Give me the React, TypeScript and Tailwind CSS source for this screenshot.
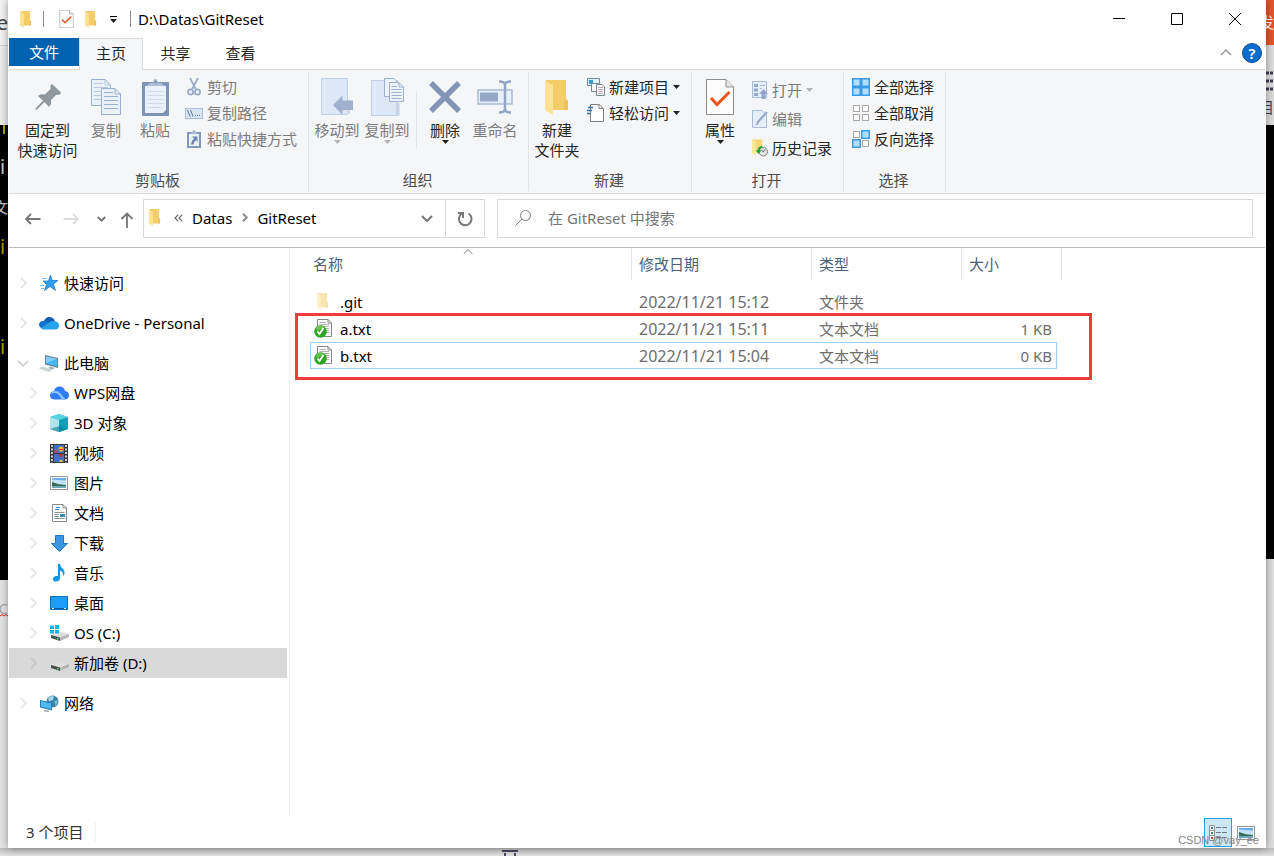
import type { ReactNode } from "react";
import { clsx } from "clsx";

/* ---------- shared glyphs ---------- */

function Folder({ className }: { className: string }) {
    return (
        <svg viewBox="0 0 25 35" className={className} preserveAspectRatio="none" aria-hidden="true">
            <path d="M1 0H21V19L23 21V30H1Z" fill="#f3cd69" />
            <path d="M21 19L23 21V30H19V21Z" fill="#eec25a" />
            <path d="M0 1L8 5V35L0 30Z" fill="#ffe394" />
        </svg>
    );
}

function Caret({ muted }: { muted?: boolean }) {
    return (
        <svg viewBox="0 0 7 4" className={clsx("w-[7px] h-1 shrink-0", muted ? "fill-[#b4b4b4]" : "fill-[#222]")} aria-hidden="true">
            <path d="M0 0H7L3.5 4Z" />
        </svg>
    );
}

type Direction = "right" | "down" | "up" | "left";

const chevronPaths: Record<Direction, string> = {
    right: "M4 1L9 6L4 11",
    left: "M8 1L3 6L8 11",
    down: "M1 4L6 9L11 4",
    up: "M1 8L6 3L11 8",
};

function Chevron({ dir, className }: { dir: Direction; className: string }) {
    return (
        <svg viewBox="0 0 12 12" fill="none" stroke="currentColor" className={clsx("shrink-0", className)} aria-hidden="true">
            <path d={chevronPaths[dir]} />
        </svg>
    );
}

function CheckedPage({ className }: { className: string }) {
    return (
        <svg viewBox="0 0 28 36" className={className} aria-hidden="true">
            <path d="M.5 .5H20L27.5 8V35.5H.5Z" fill="#fdfdfd" stroke="#8d8d8d" />
            <path d="M20 .5V8H27.5" fill="#e6e6e6" stroke="#8d8d8d" />
            <path d="M5 19L11 25.500L23.500 13" fill="none" stroke="#e9541c" strokeWidth="3" />
        </svg>
    );
}

/* ---------- ribbon icons ---------- */

const PinIcon = (
    <svg width="26" height="26" viewBox="0 0 26 26" fill="#8f989d">
        <path d="M0 25L8 16.500L3 12L6 10.200L10 10.500L15.500 5V1.500L17 0L26 8.500L25 10.500L21 11L16 16V20L14 23L9.500 18L1.500 26Z" />
    </svg>
);

const CopyIcon = (
    <svg width="30" height="36" viewBox="0 0 30 36" fill="#e9f0fa" stroke="#9bb0d1">
        <path d="M.5 .5H14L19.500 6V26.500H.5Z" />
        <path d="M14 .5V6H19.500M3 4.500H12M3 8.500H17M3 12.500H17M3 16.500H17M3 20.500H17" fill="none" stroke="#b9c8e0" />
        <path d="M10.500 9.500H24L29.500 15V35.500H10.500Z" />
        <path d="M24 9.500V15H29.500M13 13.500H22M13 17.500H27M13 21.500H27M13 25.500H27M13 29.500H27" fill="none" />
    </svg>
);

const PasteIcon = (
    <svg width="27" height="37" viewBox="0 0 27 37">
        <rect y="3" width="27" height="34" rx="1" fill="#7f92b8" />
        <path d="M3 7H24V31L21 34H3Z" fill="#ebf1fa" />
        <path d="M5 12.500H22M5 16.500H22M5 20.500H22M5 24.500H22M5 28.500H20" stroke="#cfdcee" />
        <path d="M4 7L8 4H11Q11 0 13.500 0T16 4H19L23 7Z" fill="#b0bdd6" />
        <circle cx="13.500" cy="3" r="1.500" fill="#8194b9" />
    </svg>
);

const CutIcon = (
    <svg width="14" height="18" viewBox="0 0 14 18" fill="none" stroke="#9aabca" strokeWidth="1.800">
        <path d="M3 0L9 11.500M11 0L5 11.500" />
        <circle cx="3.500" cy="14" r="2.600" />
        <circle cx="10.500" cy="14" r="2.600" />
    </svg>
);

const CopyPathIcon = (
    <svg width="18" height="11" viewBox="0 0 18 11">
        <rect x=".5" y=".5" width="17" height="10" fill="#dbe6f5" stroke="#aabddc" />
        <path d="M2.500 2L5 8.500M5.500 2L8 8.500" stroke="#5f769f" fill="none" />
        <path d="M10 7.500H11M12 7.500H13M14 7.500H15" stroke="#5f769f" />
    </svg>
);

const PasteShortcutIcon = (
    <svg width="14" height="18" viewBox="0 0 14 18">
        <path d="M0 2H14V18H0Z" fill="#8598bc" />
        <path d="M2 4H12V16H2Z" fill="#ebf1fa" />
        <path d="M3 4L5 2H5.500Q5.500 0 7 0T8.500 2H9L11 4Z" fill="#a9b8d3" />
        <path d="M5 6.500H10.500V12L8.800 10.300Q6.800 11.500 6.500 14.500H4Q4 11 7 8.500Z" fill="#6f86b0" />
    </svg>
);

const MoveToIcon = (
    <svg width="32" height="38" viewBox="0 0 32 38">
        <path d="M.5 .5H26.500V36.500H.5Z" fill="#dde7f5" stroke="#c3d1e8" />
        <path d="M4 1V36" stroke="#ebf1fa" />
        <path d="M26 24L29 21V36H26Z" fill="#cdd9ec" />
        <path d="M12 27L21.500 17.500V22.500H32V32H21.500V37Z" fill="#a0b1cf" />
    </svg>
);

const CopyToIcon = (
    <svg width="33" height="38" viewBox="0 0 33 38">
        <path d="M.5 2.500H26.500V37.500H.5Z" fill="#dde7f5" stroke="#c3d1e8" />
        <path d="M4 3V37" stroke="#ebf1fa" />
        <path d="M25 25H28.500V37.500H25Z" fill="#c6d3e9" />
        <g fill="#edf3fb" stroke="#9bb0d1">
            <path d="M13.500 .5H23L27.500 5V18.500H13.500Z" />
            <path d="M18.500 4.500H28L32.500 9V23.500H18.500Z" />
            <path d="M28 4.500V9H32.500M20.500 8.500H26M20.500 11.500H30.500M20.500 14.500H30.500M20.500 17.500H30.500M20.500 20.500H30.500" fill="none" />
        </g>
    </svg>
);

const DeleteIcon = (
    <svg width="32" height="32" viewBox="0 0 32 32" stroke="#8494b6" strokeWidth="5.500">
        <path d="M2 2L30 30M30 2L2 30" />
    </svg>
);

const RenameIcon = (
    <svg width="36" height="34" viewBox="0 0 36 34" fill="none">
        <path d="M1 10H35V24H1Z" fill="#e8f0fa" stroke="#a9bad8" strokeWidth="1.500" />
        <path d="M3 12.500H21V21.500H3Z" fill="#97a9ca" />
        <path d="M22 1.500Q28 1.500 28 5V29Q28 32.500 22 32.500M34 1.500Q28 1.500 28 5M28 29Q28 32.500 34 32.500" stroke="#92a5c8" strokeWidth="2.500" />
    </svg>
);

const NewItemIcon = (
    <svg width="18" height="18" viewBox="0 0 18 18">
        <path d="M.5 .5H12.500V7.500H.5Z" fill="#dff1fb" stroke="#6e8c9e" />
        <path d="M2 2H6V6H2Z" fill="#2f9bd7" />
        <path d="M4.500 5.500H11.500V13.500H4.500Z" fill="#fff" stroke="#7a8790" />
        <path d="M9.500 6.500H15L17.500 9V17.500H9.500Z" fill="#fff" stroke="#7a8790" />
        <path d="M11 9.500H16M11 11.500H16M11 13.500H16M11 15.500H16" stroke="#c0a5b4" />
    </svg>
);

const EasyAccessIcon = (
    <svg width="18" height="18" viewBox="0 0 18 18" fill="none">
        <path d="M3.500 .5H12L16.500 4.500V17.500H3.500Z" fill="#fff" stroke="#808080" />
        <path d="M12 .5V4.500H16.500" stroke="#808080" />
        <path d="M1 3.500H6M0 6.500H5M0 9.500H3" stroke="#2e6ea5" strokeWidth="1.500" />
    </svg>
);

const OpenIcon = (
    <svg width="16" height="18" viewBox="0 0 16 18">
        <path d="M.5 .5H14.500V16.500H.5Z" fill="#e6eef9" stroke="#a9bbd9" />
        <path d="M2 3H6V6H2ZM2 7.500H6V10.500H2ZM2 12H6V15H2Z" fill="#96a9cc" />
        <path d="M8 4.500H13M8 7.500H10" stroke="#a9bbd9" />
        <path d="M11.500 8L16 13H13.500V18H9.500V13H7Z" fill="#91a4c7" />
    </svg>
);

const EditIcon = (
    <svg width="16" height="18" viewBox="0 0 16 18">
        <path d="M.5 .5H10L14.500 5V17.500H.5Z" fill="#e6eef9" stroke="#a9bbd9" />
        <path d="M15 2L5 13" stroke="#93a6c9" strokeWidth="2" />
        <path d="M5.500 12L3 15.500L7 14Z" fill="#93a6c9" />
    </svg>
);

const HistoryIcon = (
    <svg width="17" height="18" viewBox="0 0 17 18" fill="none">
        <path d="M0 0H11V14H0Z" fill="#f5d577" />
        <path d="M0 0L4 2V17L0 15Z" fill="#ffe799" />
        <circle cx="12" cy="13" r="4.500" fill="#e4e4e4" stroke="#7c7c7c" />
        <path d="M12 13L14 10.500M12 13L10 11.500" stroke="#555" />
        <path d="M11 7.500Q6.500 8.500 7 13" stroke="#18a53a" strokeWidth="2" />
        <path d="M4 11.500H10L7 15.500Z" fill="#18a53a" />
    </svg>
);

function TilesIcon({ on }: { on: boolean[] }) {
    const spots = [[1, 1], [10, 1], [1, 10], [10, 10]];
    return (
        <svg width="18" height="18" viewBox="0 0 18 18">
            {spots.map(([x, y], i) =>
                on[i] ? (
                    <rect key={i} x={x - 0.25} y={y - 0.25} width="7.500" height="7.500" fill="#b5dcfa" stroke="#3a9ae2" strokeWidth="1.500" />
                ) : (
                    <rect key={i} x={x + 0.5} y={y + 0.5} width="6" height="6" fill="#fff" stroke="#a8a8a8" />
                )
            )}
        </svg>
    );
}

/* ---------- ribbon building blocks ---------- */

interface BigButtonProps {
    icon: ReactNode;
    lines: string[];
    width: string;
    muted?: boolean;
    caret?: boolean;
}

function BigButton({ icon, lines, width, muted, caret }: BigButtonProps) {
    return (
        <button type="button" className={clsx("flex flex-col items-center shrink-0", width, muted ? "text-[#7c7c7c]" : "text-[#262626]")}>
            <span className="h-11 pb-0.5 flex items-center justify-center">{icon}</span>
            {lines.map((line) => (
                <span key={line} className="leading-5 whitespace-nowrap">{line}</span>
            ))}
            {caret && <Caret muted={muted} />}
        </button>
    );
}

interface SmallButtonProps {
    icon: ReactNode;
    label: string;
    muted?: boolean;
    caret?: boolean;
    tall?: boolean;
}

function SmallButton({ icon, label, muted, caret, tall }: SmallButtonProps) {
    return (
        <button type="button" className={clsx("flex items-center gap-1 whitespace-nowrap", tall ? "h-[29px]" : "h-[26px]", muted ? "text-[#7c7c7c]" : "text-[#262626]")}>
            <span className={clsx("flex justify-center", tall ? "w-4" : "w-[18px]")}>{icon}</span>
            <span>{label}</span>
            {caret && <Caret muted={muted} />}
        </button>
    );
}

function RibbonGroup({ title, width, children }: { title: string; width: string; children: ReactNode }) {
    return (
        <section aria-label={title} className={clsx("flex flex-col border-r border-[#e2e3e4] my-0.5 shrink-0", width)}>
            <div className="flex items-start h-[98px] px-[3px] pt-1">{children}</div>
            <h2 className="text-center leading-5 text-[#4d4d4d] pr-0.5">{title}</h2>
        </section>
    );
}

function Ribbon() {
    return (
        <div className="flex h-[124px] bg-[#f5f6f7] border-b border-[#dadbdc]">
            <RibbonGroup title="剪贴板" width="w-[300px]">
                <BigButton icon={PinIcon} lines={["固定到", "快速访问"]} width="w-[71px]" />
                <BigButton icon={CopyIcon} lines={["复制"]} width="w-[46px]" muted />
                <BigButton icon={PasteIcon} lines={["粘贴"]} width="w-[52px]" muted />
                <div className="flex flex-col -mt-0.5 pl-1">
                    <SmallButton icon={CutIcon} label="剪切" muted />
                    <SmallButton icon={CopyPathIcon} label="复制路径" muted />
                    <SmallButton icon={PasteShortcutIcon} label="粘贴快捷方式" muted />
                </div>
            </RibbonGroup>
            <RibbonGroup title="组织" width="w-[220px]">
                <BigButton icon={MoveToIcon} lines={["移动到"]} width="w-[50px]" muted caret />
                <BigButton icon={CopyToIcon} lines={["复制到"]} width="w-[50px]" muted caret />
                <div className="w-px h-14 mt-4 ml-1 mr-[3px] bg-[#e2e3e4]" />
                <BigButton icon={DeleteIcon} lines={["删除"]} width="w-[50px]" caret />
                <BigButton icon={RenameIcon} lines={["重命名"]} width="w-[50px]" muted />
            </RibbonGroup>
            <RibbonGroup title="新建" width="w-[163px]">
                <BigButton icon={<Folder className="w-[25px] h-[35px]" />} lines={["新建", "文件夹"]} width="w-[50px]" />
                <div className="flex flex-col -mt-0.5 pl-[5px]">
                    <SmallButton icon={NewItemIcon} label="新建项目" caret />
                    <SmallButton icon={EasyAccessIcon} label="轻松访问" caret />
                </div>
            </RibbonGroup>
            <RibbonGroup title="打开" width="w-[152px]">
                <BigButton icon={<CheckedPage className="w-7 h-9" />} lines={["属性"]} width="w-[50px]" caret />
                <div className="flex flex-col -mt-px pl-[7px]">
                    <SmallButton icon={OpenIcon} label="打开" muted caret tall />
                    <SmallButton icon={EditIcon} label="编辑" muted tall />
                    <SmallButton icon={HistoryIcon} label="历史记录" tall />
                </div>
            </RibbonGroup>
            <RibbonGroup title="选择" width="w-[102px]">
                <div className="flex flex-col -mt-0.5 pl-[5px]">
                    <SmallButton icon={<TilesIcon on={[true, true, true, true]} />} label="全部选择" />
                    <SmallButton icon={<TilesIcon on={[false, false, false, false]} />} label="全部取消" />
                    <SmallButton icon={<TilesIcon on={[false, true, true, false]} />} label="反向选择" />
                </div>
            </RibbonGroup>
        </div>
    );
}

/* ---------- title bar and tabs ---------- */

function TitleBar() {
    return (
        <header className="flex items-center h-[38px] pl-[11px]">
            <Folder className="w-3 h-[17px]" />
            <span className="w-px h-4 ml-[11px] bg-[#8a8a8a]" />
            <button type="button" aria-label="属性" className="ml-[15px]">
                <CheckedPage className="w-[15px] h-[18px]" />
            </button>
            <button type="button" aria-label="新建文件夹" className="ml-[11px]">
                <Folder className="w-3 h-[17px]" />
            </button>
            <button type="button" aria-label="自定义快速访问工具栏" className="ml-[13px] flex flex-col items-center gap-0.5">
                <span className="w-[7px] h-px bg-black" />
                <Caret />
            </button>
            <span className="w-px h-4 ml-[13px] bg-[#8a8a8a]" />
            <h1 className="ml-[7px] text-black">D:\Datas\GitReset</h1>
            <div className="ml-auto flex self-stretch pr-px">
                <button type="button" aria-label="最小化" className="w-[58px] flex items-center justify-center">
                    <svg width="12" height="12" stroke="#000"><path d="M0 5.500H12" /></svg>
                </button>
                <button type="button" aria-label="最大化" className="w-[58px] flex items-center justify-center">
                    <svg width="12" height="12" stroke="#000" fill="none"><path d="M.5 .5H11.500V11.500H.5Z" /></svg>
                </button>
                <button type="button" aria-label="关闭" className="w-[58px] flex items-center justify-center">
                    <svg width="12" height="12" stroke="#000"><path d="M0 0L12 12M12 0L0 12" /></svg>
                </button>
            </div>
        </header>
    );
}

function Tabs() {
    return (
        <div className="flex h-8 border-b border-[#dadbdc] text-[#262626]">
            <button type="button" className="w-[70px] h-7 bg-[#0063b1] text-white">文件</button>
            <button type="button" className="w-16 h-8 pb-1 bg-[#f5f6f7] border border-b-0 border-[#dadbdc]">主页</button>
            <button type="button" className="w-[65px] h-[30px]">共享</button>
            <button type="button" className="w-[65px] h-[30px]">查看</button>
            <div className="ml-auto flex items-center gap-2.5 pr-[3px] pb-0.5">
                <button type="button" aria-label="折叠功能区">
                    <Chevron dir="up" className="w-3 h-3 text-[#9a9a9a] stroke-[1.500]" />
                </button>
                <button type="button" aria-label="帮助" className="w-5 h-5 rounded-full bg-[#0a6ccf] border border-[#0b4f94] text-white font-semibold leading-4">?</button>
            </div>
        </div>
    );
}

/* ---------- address row ---------- */

function AddressRow() {
    return (
        <div className="flex h-[54px] pt-[5px] items-start border-b border-[#bdbdbd]">
            <div className="flex items-center h-[39px] w-[134px] pl-4 text-[#777] shrink-0">
                <button type="button" aria-label="后退">
                    <svg width="16" height="12" viewBox="0 0 16 12" fill="none" stroke="currentColor" strokeWidth="1.800"><path d="M1 6H15.500M6 1L1 6L6 11" /></svg>
                </button>
                <button type="button" aria-label="前进" className="ml-[22px] text-[#dcdcdc]">
                    <svg width="16" height="12" viewBox="0 0 16 12" fill="none" stroke="currentColor" strokeWidth="1.800"><path d="M.5 6H15M10 1L15 6L10 11" /></svg>
                </button>
                <button type="button" aria-label="最近浏览的位置" className="ml-[18px]">
                    <Chevron dir="down" className="w-[9px] h-[9px] stroke-[2.500]" />
                </button>
                <button type="button" aria-label="上移" className="ml-[14px] mt-0.5">
                    <svg width="14" height="16" viewBox="0 0 14 16" fill="none" stroke="currentColor" strokeWidth="1.800"><path d="M7 1V16M1.500 7L7 1.500L12.500 7" /></svg>
                </button>
            </div>
            <div className="flex h-[39px] w-[342px] border border-[#d9d9d9] shrink-0">
                <nav aria-label="地址" className="flex flex-1 items-center pl-[5px] pb-0.5 text-black">
                    <Folder className="w-3 h-[17px]" />
                    <span className="ml-3 flex text-[#6b6b6b]">
                        <Chevron dir="left" className="w-2 h-2 -mr-1 stroke-[1.800]" />
                        <Chevron dir="left" className="w-2 h-2 stroke-[1.800]" />
                    </span>
                    <a href="#datas" className="ml-[7px]">Datas</a>
                    <Chevron dir="right" className="w-[9px] h-[9px] mx-2 stroke-[2.500] text-[#8a8a8a]" />
                    <a href="#gitreset">GitReset</a>
                    <button type="button" aria-label="以前的位置" className="ml-auto mr-3 text-[#777]">
                        <Chevron dir="down" className="w-3 h-3 stroke-2" />
                    </button>
                </nav>
                <button type="button" aria-label="刷新" className="w-[39px] border-l border-[#d9d9d9] flex items-center justify-center text-[#777]">
                    <svg width="16" height="16" viewBox="0 0 16 16" fill="none" stroke="currentColor" strokeWidth="2"><path d="M11.500 2.500A6.300 6.300 0 1 1 4.500 2.800M1 2H6V7" /></svg>
                </button>
            </div>
            <label className="flex flex-1 items-center h-[39px] ml-3 mr-3 pl-[17px] pb-0.5 border border-[#d9d9d9] text-[#757575]">
                <svg width="16" height="16" viewBox="0 0 16 16" fill="none" stroke="#7c7c7c" className="shrink-0" aria-hidden="true">
                    <circle cx="10.500" cy="5.500" r="5" />
                    <path d="M7 9L.5 15.500" />
                </svg>
                <input type="search" aria-label="搜索" placeholder="在 GitReset 中搜索" className="flex-1 min-w-0 ml-[17px] bg-transparent outline-none placeholder:text-[#757575]" />
            </label>
        </div>
    );
}

/* ---------- navigation tree ---------- */

const StarIcon = (
    <svg width="18" height="16" viewBox="0 0 18 16">
        <path d="M10.500 0L12.200 5.500H18L13.500 9L15.500 15.500L10 11.500L4.500 15.500L6.500 9.500L3 6H8.500Z" fill="#2f9df0" stroke="#1474c4" strokeWidth=".7" />
        <path d="M2 3.500H7M0 10.500H4M1 13.500H4" stroke="#74bdf2" />
    </svg>
);

const OneDriveIcon = (
    <svg width="20" height="14" viewBox="0 0 20 14">
        <path d="M5 5Q7 .5 11 1Q15 1.500 16 5.500L10 9L3 12Q0 10 .5 7.500T5 5Z" fill="#0f5eb5" />
        <path d="M5 4.800Q8 4.500 10 6.500L2 12Q0 10.500 0 8.800Q.5 5.500 5 4.800Z" fill="#1273cf" />
        <path d="M10 6.500Q13 4.500 16 5.200Q20 6 20 9.500Q20 13.500 16 13.500H4.500Q3 13.500 2 12Z" fill="#27a1ea" />
    </svg>
);

const PcIcon = (
    <svg width="20" height="17" viewBox="0 0 20 17">
        <path d="M6 0L19 3V13L6 9.500Z" fill="#6b8090" />
        <path d="M7 1.500L18 4V11.500L7 8.500Z" fill="#43b6f3" />
        <path d="M7 1.500L18 4L7 8Z" fill="#80d0f8" />
        <path d="M11 11.500L16 13L13 14.500L9 13Z" fill="#a6b0b6" />
        <path d="M3 11.500L14 14.500L10 17L0 13.500Z" fill="#ced3d6" />
    </svg>
);

const WpsCloudIcon = (
    <svg width="19" height="14" viewBox="0 0 19 14">
        <path d="M4 5Q5 .5 9.500 .5T15 5Q19 5.500 19 9.300T15 13.500H4Q0 13 0 9.300T4 5Z" fill="#2f7cf6" />
        <path d="M3.500 5Q8 4 11 8L15.500 13.500H12L8 8Q5 6 1 8Q1.500 5.500 3.500 5Z" fill="#8cc6ff" />
    </svg>
);

const CubeIcon = (
    <svg width="18" height="18" viewBox="0 0 18 18">
        <path d="M9 0L18 3V15L9 18L0 15V3Z" fill="#35bcd0" />
        <path d="M0 3L9 6V18L0 15Z" fill="#aee6ec" />
        <path d="M18 3L9 6V18L18 15Z" fill="#11a1bb" />
        <path d="M9 0L18 3L9 6L0 3Z" fill="#58d3df" />
        <path d="M9 12L18 15L9 18L0 15Z" fill="#0b7b94" opacity=".6" />
    </svg>
);

const VideoIcon = (
    <svg width="18" height="19" viewBox="0 0 18 19">
        <path d="M0 0H18V19H0Z" fill="#35383c" />
        <path d="M4 1H14V9H4ZM4 10H14V18H4Z" fill="#3e6fd2" />
        <path d="M4 7L8 5V9H4Z" fill="#b24a68" />
        <circle cx="11" cy="5" r="2.500" fill="#e5c12b" />
        <path d="M9 5.500H13" stroke="#c32d2d" />
        <path d="M8 10L11 14L13 10Z" fill="#c23030" />
        <path d="M9 18Q11 13 13 18Z" fill="#e5c12b" />
        <path d="M2 1V19M16 1V19" stroke="#fff" strokeWidth="1.500" strokeDasharray="2 1.500" />
    </svg>
);

function PhotoIcon() {
    return (
        <svg width="18" height="14" viewBox="0 0 18 14">
            <path d="M.5 .5H17.500V13.500H.5Z" fill="#fff" stroke="#8f979d" />
            <path d="M2 2H16V12H2Z" fill="#c3e2f8" />
            <path d="M2 2H16V4.500L2 3.500Z" fill="#6aabec" />
            <path d="M2 6L8 8L16 9V10H2Z" fill="#376e5c" />
            <path d="M2 10H16V12H2Z" fill="#6fa5bd" />
        </svg>
    );
}

const DocIcon = (
    <svg width="15" height="18" viewBox="0 0 15 18" fill="none">
        <path d="M.5 .5H11L14.500 4V17.500H.5Z" fill="#fff" stroke="#858b90" />
        <path d="M11 .5V4H14.500" stroke="#858b90" />
        <path d="M4 3.500H8M3 5.500H7" stroke="#2796dc" />
        <path d="M2.500 8.500H12.500M2.500 12.500H7M2.500 14.500H12.500M2.500 10.500H7" stroke="#88939b" />
        <path d="M8 10H13V13H8Z" fill="#3889b5" />
    </svg>
);

const DownloadIcon = (
    <svg width="17" height="17" viewBox="0 0 17 17">
        <path d="M4.500 .5H12.500V8.500H16.500L8.500 16.500L.5 8.500H4.500Z" fill="#3b97e3" stroke="#2377bd" />
    </svg>
);

const MusicIcon = (
    <svg width="12" height="18" viewBox="0 0 12 18" fill="#0c97ee">
        <path d="M5 0H7Q7.500 3 10 5T11 11L10 12Q10.500 8 7 6.500V14Q7 17 3.500 17.500T0 15Q0 12.500 3 12H5Z" />
    </svg>
);

const DesktopIcon = (
    <svg width="18" height="14" viewBox="0 0 18 14">
        <path d="M.5 .5H17.500V13.500H.5Z" fill="#1c9df7" stroke="#0d70bd" />
        <path d="M1 12.500H17" stroke="#0b5f9f" />
        <path d="M2 12.500H4M14 12.500H16" stroke="#d8effd" />
    </svg>
);

function DriveIcon({ system }: { system?: boolean }) {
    return (
        <svg width="19" height="16" viewBox="0 0 19 16">
            <path d="M1 10L10 6.500L19 9L10 13Z" fill="#dedede" />
            <path d="M1 10L10 12.500V16L1 13Z" fill="#4a5052" />
            <path d="M10 12.500L19 9V12L10 16Z" fill="#b5b5b5" />
            <path d="M7 13.700H8.500" stroke="#5ddd6c" strokeWidth="1.500" />
            {system && <path d="M0 .5H4V4H0ZM5 0H9V4H5ZM0 5H4V8.500H0ZM5 5H9V8.500H5Z" fill="#12b4ea" />}
        </svg>
    );
}

const NetworkIcon = (
    <svg width="19" height="17" viewBox="0 0 19 17">
        <circle cx="12.500" cy="6.500" r="6" fill="#3a82aa" />
        <path d="M8 3Q11 0 14 1.500L13 5L9 6.500Z" fill="#a3d4e8" />
        <path d="M14 6L18 5Q18 9 15.500 11Z" fill="#78b6cf" />
        <path d="M0 5L12 7.500V15.500L0 12.500Z" fill="#2e7fb7" />
        <path d="M1 6.200L11 8.500V14L1 11.500Z" fill="#4fbaf3" />
        <path d="M4 15.500L9 16.500" stroke="#9aa5ab" strokeWidth="1.500" />
    </svg>
);

interface TreeNode {
    label: string;
    icon: ReactNode;
    nested?: boolean;
    open?: boolean;
    selected?: boolean;
}

const treeGroups: TreeNode[][] = [
    [{ label: "快速访问", icon: StarIcon }],
    [{ label: "OneDrive - Personal", icon: OneDriveIcon }],
    [
        { label: "此电脑", icon: PcIcon, open: true },
        { label: "WPS网盘", icon: WpsCloudIcon, nested: true },
        { label: "3D 对象", icon: CubeIcon, nested: true },
        { label: "视频", icon: VideoIcon, nested: true },
        { label: "图片", icon: <PhotoIcon />, nested: true },
        { label: "文档", icon: DocIcon, nested: true },
        { label: "下载", icon: DownloadIcon, nested: true },
        { label: "音乐", icon: MusicIcon, nested: true },
        { label: "桌面", icon: DesktopIcon, nested: true },
        { label: "OS (C:)", icon: <DriveIcon system />, nested: true },
        { label: "新加卷 (D:)", icon: <DriveIcon />, nested: true, selected: true },
    ],
    [{ label: "网络", icon: NetworkIcon }],
];

function Sidebar() {
    return (
        <nav aria-label="导航窗格" className="w-[281px] shrink-0 border-r border-[#f0f0f0] pt-5 pr-0.5 flex flex-col gap-2.5">
            {treeGroups.map((group) => (
                <ul key={group[0].label}>
                    {group.map((node) => (
                        <li key={node.label}>
                            <button
                                type="button"
                                className={clsx("flex items-center w-full h-[30px] text-black", node.nested ? "pl-[18px]" : "pl-2", node.selected && "bg-[#d9d9d9]")}
                            >
                                <Chevron
                                    dir={node.open ? "down" : "right"}
                                    className={clsx("w-3 h-3 stroke-[1.800]", node.open ? "text-[#d4d4d4]" : node.selected ? "text-[#c8c8c8]" : "text-[#e6e6e6]")}
                                />
                                <span className="w-5 ml-2.5 mr-[5px] flex justify-center">{node.icon}</span>
                                {node.label}
                            </button>
                        </li>
                    ))}
                </ul>
            ))}
        </nav>
    );
}

/* ---------- file list ---------- */

const TextFileIcon = (
    <svg width="18" height="19" viewBox="0 0 18 19">
        <path d="M3.500 .5H14L17.500 4V17.500H3.500Z" fill="#fff" stroke="#888" />
        <path d="M14 .5V4H17.500" fill="none" stroke="#888" />
        <path d="M5.500 3.500H12M5.500 5.500H15M5.500 7.500H15M10 9.500H15M12 11.500H15M12 13.500H15" stroke="#b0b0b0" />
        <circle cx="6.500" cy="12.500" r="6.200" fill="#30a325" />
        <path d="M2 9Q6 4 11 9Q7 9 3 13Z" fill="#7fd065" opacity=".7" />
        <path d="M3.500 12.500L5.500 15L9.500 9" stroke="#fff" strokeWidth="1.800" fill="none" />
    </svg>
);

interface FileRow {
    name: string;
    date: string;
    type: string;
    size: string;
    icon: ReactNode;
    focused?: boolean;
}

const files: FileRow[] = [
    { name: ".git", date: "2022/11/21 15:12", type: "文件夹", size: "", icon: <Folder className="w-3 h-[17px] opacity-50" /> },
    { name: "a.txt", date: "2022/11/21 15:11", type: "文本文档", size: "1 KB", icon: TextFileIcon },
    { name: "b.txt", date: "2022/11/21 15:04", type: "文本文档", size: "0 KB", icon: TextFileIcon, focused: true },
];

function FileList() {
    return (
        <main className="relative flex-1 min-w-0 pl-5">
            <table className="table-fixed w-[752px] border-separate border-spacing-0">
                <colgroup>
                    <col className="w-[322px]" />
                    <col className="w-[180px]" />
                    <col className="w-[150px]" />
                    <col className="w-[95px]" />
                    <col className="w-[5px]" />
                </colgroup>
                <thead className="text-left text-[#4c607a]">
                    <tr className="h-8">
                        <th scope="col" className="relative p-0 pl-[3px] font-normal border-r border-[#e5e5e5]">
                            名称
                            <Chevron dir="up" className="absolute left-[153px] -top-px w-2.5 h-2.5 text-[#555]" />
                        </th>
                        <th scope="col" className="p-0 pl-[7px] font-normal border-r border-[#e5e5e5]">修改日期</th>
                        <th scope="col" className="p-0 pl-[7px] font-normal border-r border-[#e5e5e5]">类型</th>
                        <th scope="col" className="p-0 pl-[7px] font-normal">大小</th>
                        <td className="p-0 border-r border-[#e5e5e5]" />
                    </tr>
                </thead>
                <tbody className="text-[#6d6d6d] before:block before:h-2">
                    {files.map((file) => {
                        const edge = file.focused ? "border-y border-[#99d1ff]" : "";
                        return (
                            <tr key={file.name} className="h-[27px]">
                                <td className={clsx("p-0", edge, file.focused && "border-l")}>
                                    <span className={clsx("flex items-center text-black", file.focused ? "pl-0.5" : "pl-[3px]")}>
                                        <span className="w-5 mr-[7px] flex justify-center">{file.icon}</span>
                                        {file.name}
                                    </span>
                                </td>
                                <td className={clsx("p-0 pl-[7px] text-base leading-5", edge)}>{file.date}</td>
                                <td className={clsx("p-0 pl-[7px]", edge)}>{file.type}</td>
                                <td className={clsx("p-0 text-right", edge, file.focused ? "border-r pr-1" : "pr-[5px]")}>{file.size}</td>
                                <td className="p-0" />
                            </tr>
                        );
                    })}
                </tbody>
            </table>
            {/* marker drawn over the two text files */}
            <div className="absolute left-[5px] top-[65px] w-[797px] h-[67px] border-3 border-[#f23c3c] pointer-events-none" />
        </main>
    );
}

function StatusBar() {
    return (
        <footer className="flex h-[31px] items-center pl-[17px] text-[#333]">
            <span className="pr-3 mb-0.5 border-r border-[#f0f0f0]">3 个项目</span>
            <div className="ml-auto flex items-center gap-[5px] pr-2.5">
                <button type="button" aria-label="详细信息" className="w-7 h-[29px] bg-[#cce8f6] border border-[#26a0da] flex items-center justify-center">
                    <svg width="18" height="16" viewBox="0 0 18 16" fill="none">
                        <path d="M.5 .5H5.500V15.500H.5ZM.5 5.500H5.500M.5 10.500H5.500" fill="#fff" stroke="#8b959b" />
                        <path d="M2 3H4" stroke="#3277b9" strokeWidth="2" />
                        <path d="M2 8H4" stroke="#3a8f5a" strokeWidth="2" />
                        <path d="M2 13H4" stroke="#c23a2c" strokeWidth="2" />
                        <path d="M7 2.500H12M13 2.500H18M7 7.500H12M13 7.500H18M7 12.500H12M13 12.500H18" stroke="#6e7b82" />
                    </svg>
                </button>
                <button type="button" aria-label="大图标"><PhotoIcon /></button>
            </div>
        </footer>
    );
}

/* ---------- slivers of the windows behind ---------- */

function LeftSliver() {
    return (
        <div aria-hidden="true" className="flex flex-col w-2 overflow-hidden">
            <div className="h-[46px] bg-[#f3f3f3] border-b border-[#cfcfcf] text-xl leading-[46px] text-[#444]">
                <span className="flex justify-end">e</span>
            </div>
            <div className="h-[79px] bg-[#ececec]" />
            <div className="h-[455px] bg-black text-[#c8c8c8] text-xl leading-10">
                <div className="h-[22px]">
                    <div className="w-[5px] h-[9px] border-r-2 border-[#a2a200]" />
                </div>
                <div className="h-10 leading-10">i</div>
                <div className="h-10 leading-10 text-[15px] flex justify-end">文</div>
                <div className="h-10 leading-10 text-[#a2a200]">i</div>
                <div className="h-[60px]" />
                <div className="h-10 leading-10 text-[#a2a200]">i</div>
            </div>
            <div className="flex-1 bg-[#e4e4e4] pt-[18px] text-[#aaa]">
                <span className="flex justify-end">C</span>
                <svg width="8" height="3" fill="none" stroke="#e02020" className="-mt-1"><path d="M0 2L2 .5L4 2L6 .5L8 2" /></svg>
            </div>
        </div>
    );
}

function RightSliver() {
    return (
        <div aria-hidden="true" className="flex flex-col w-2 overflow-hidden">
            <div className="h-[45px] bg-[#e8532a] text-white leading-[45px]">
                <span className="flex justify-end">发</span>
            </div>
            <div className="h-20 bg-[#dcdcdc] pt-[26px] text-[#3d3d55]">
                <svg width="8" height="20" fill="none" stroke="currentColor" strokeWidth="3" strokeDasharray="3 1">
                    <path d="M0 2H8M0 10H8M0 18H8" />
                </svg>
                <span className="flex justify-end leading-8">目</span>
            </div>
            <div className="h-[434px] bg-black" />
            <div className="flex-1 bg-[#dedede]" />
        </div>
    );
}

export default function App() {
    return (
        <div className="flex flex-col min-h-screen bg-[#d8d8d8] text-[15px] leading-5 font-['Noto_Sans','Noto_Sans_CJK_SC',sans-serif]">
            <div className="flex flex-1">
                <LeftSliver />
                <div className="relative flex flex-col flex-1 min-w-0 px-px bg-white shadow-[0_0_8px_rgba(0,0,0,0.4)]">
                    <TitleBar />
                    <Tabs />
                    <Ribbon />
                    <AddressRow />
                    <div className="flex flex-1">
                        <Sidebar />
                        <FileList />
                    </div>
                    <StatusBar />
                    <span className="absolute right-[7px] bottom-0 text-[11px] leading-4 text-[#858585] font-['Liberation_Sans',sans-serif]">CSDN @vay_ee</span>
                </div>
                <RightSliver />
            </div>
            <div aria-hidden="true" className="flex h-2 bg-linear-to-b from-[#bdbdbd] to-[#e2e2e2]">
                <svg width="16" height="8" className="ml-[502px]" stroke="#4a4a5e" strokeWidth="2">
                    <path d="M0 3H16M3 5V8M13 5V8" />
                </svg>
            </div>
        </div>
    );
}
